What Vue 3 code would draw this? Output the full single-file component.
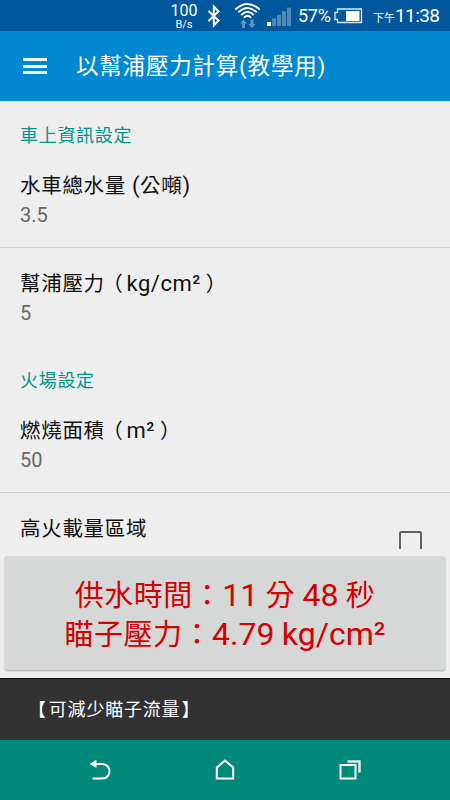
<template>
  <div class="screen">
    <div class="status-bar">
      <div class="speed">
        <span class="speed-num">100</span>
        <span class="speed-unit">B/s</span>
      </div>
      <svg class="bluetooth" width="14" height="24" viewBox="0 0 14 24">
        <path d="M1.5 7 L11.5 16.5 L6.8 21.5 V2.5 L11.5 7.5 L1.5 17" fill="none" stroke="#fff" stroke-width="2" />
      </svg>
      <svg class="wifi" width="28" height="28" viewBox="0 0 28 28">
        <g fill="none" stroke="#fff" stroke-width="1.9">
          <path d="M1.300 7.500 Q13.500 -3.500 25.700 7.500" />
          <path d="M4.300 10.300 Q13.500 1.500 22.700 10.300" />
          <path d="M7.200 13 Q13.500 6.500 19.800 13" />
          <path d="M10 15.600 Q13.500 12 17 15.600" />
        </g>
        <path d="M9.500 17.500 L13 21.500 H11 V26 H8 V21.500 H6 Z M18 26 L14.500 22 H16.500 V17.500 H19.500 V22 H21.500 Z" fill="#5f97c5" />
      </svg>
      <svg class="signal" width="25" height="20" viewBox="0 0 25 20">
        <rect x="0" y="15" width="4" height="4" fill="#fff" />
        <rect v-for="n in 4" :key="n" :x="n * 5" :y="15 - n * 3.6" width="4" :height="4 + n * 3.6" fill="#4f88bb" />
      </svg>
      <span class="percent">57%</span>
      <svg class="battery" width="29" height="16" viewBox="0 0 29 16">
        <path d="M3.500 1 H27.500 V14.500 H3.500 V11.500 H1 V4.500 H3.500 Z" fill="none" stroke="#dce9f4" stroke-width="1.300" />
        <rect x="12" y="3" width="13.500" height="10" fill="#fff" />
      </svg>
      <span class="ampm">下午</span>
      <span class="time">11:38</span>
    </div>

    <header class="toolbar">
      <div class="menu"><i></i><i></i><i></i></div>
      <h1>以幫浦壓力計算(教學用)</h1>
    </header>

    <main class="settings">
      <template v-for="group in groups" :key="group.name">
        <h2>{{ group.name }}</h2>
        <div v-for="item in group.items" :key="item.title" class="pref">
          <div class="pref-text">
            <p class="pref-title"><span class="cjk">{{ item.title }}<template v-if="item.wide"><span class="open">（</span></template></span><template v-if="item.wide"><span class="latin">{{ item.wide }}</span><span class="cjk close">）</span></template><template v-if="item.unit"><span class="latin"> (</span><span class="cjk">{{ item.unit }}</span><span class="latin">)</span></template></p>
            <p v-if="item.value" class="pref-value">{{ item.value }}</p>
          </div>
          <span v-if="item.check" class="checkbox"></span>
        </div>
      </template>
    </main>

    <section class="result-wrap">
      <div class="result">
        <p><span class="cjk">供水時間：</span>11 <span class="cjk">分</span> 48 <span class="cjk">秒</span></p>
        <p><span class="cjk">瞄子壓力：</span>4.79 kg/cm²</p>
      </div>
    </section>

    <div class="hint"><span class="open">【</span>可減少瞄子流量<span class="close">】</span></div>

    <nav class="nav-bar">
      <svg width="24" height="24" viewBox="0 0 24 24">
        <path d="M6 6 H14 C24 6 24 20.500 14 20.500 H4.500" fill="none" stroke="#fff" stroke-width="2" />
        <path d="M1.500 6 L8.500 1.800 V10 Z" fill="#fff" />
      </svg>
      <svg width="24" height="24" viewBox="0 0 24 24">
        <path d="M3.800 20.500 V9.500 L12 2.500 L20.200 9.500 V20.500 Z" fill="none" stroke="#fff" stroke-width="2" />
      </svg>
      <svg width="24" height="24" viewBox="0 0 24 24">
        <path d="M2.500 7 H17.500 V20.500 H2.500 Z" fill="none" stroke="#fff" stroke-width="2" />
        <path d="M9.500 3.500 H21.500 V14.500" fill="none" stroke="#dcefeb" stroke-width="2.500" />
      </svg>
    </nav>
  </div>
</template>

<script setup>
const groups = [
  {
    name: '車上資訊設定',
    items: [
      { title: '水車總水量', unit: '公噸', value: '3.5' },
      { title: '幫浦壓力', wide: 'kg/cm²', value: '5' }
    ]
  },
  {
    name: '火場設定',
    items: [
      { title: '燃燒面積', wide: 'm²', value: '50' },
      { title: '高火載量區域', check: true }
    ]
  }
]
</script>

<style>
body { margin: 0; }
</style>

<style scoped>
.screen {
  width: 450px;
  height: 800px;
  display: flex;
  flex-direction: column;
  overflow: hidden;
  background: #eeeeee;
  font-family: Roboto, "Noto Sans CJK TC", sans-serif;
}
p, h1, h2 { margin: 0; font-weight: normal; white-space: pre; }

.status-bar { flex: none; height: 31px; box-sizing: border-box; padding-right: 12px; background: #01579b; color: #fff; display: flex; justify-content: flex-end; align-items: center; }
.speed { display: flex; flex-direction: column; align-items: center; width: 28px; margin-right: 9px; }
.speed-num { font-size: 16px; line-height: 17px; }
.speed-unit { font-size: 11px; line-height: 11px; }
.bluetooth { margin-right: 13px; }
.wifi { margin-right: 5px; }
.signal { margin: 2px 6px 0 0; }
.percent { width: 33px; font-size: 18px; letter-spacing: -0.3px; }
.battery { margin: 0 10px 0 3px; }
.ampm { font-size: 11px; margin-top: 3px; }
.time { width: 43px; font-size: 19px; letter-spacing: -0.6px; }

.toolbar { flex: none; height: 70px; display: flex; align-items: center; padding-left: 23px; background: #0288d1; color: #fff; }
.menu { width: 24px; height: 16px; margin-right: 29px; display: flex; flex-direction: column; justify-content: space-between; }
.menu i { height: 3px; background: #f4fafd; }
.toolbar h1 { font-size: 22.5px; line-height: 30px; letter-spacing: 0.8px; }

.settings { height: 448px; margin-bottom: 7px; flex: none; overflow: hidden; }
.settings h2 { height: 49px; padding: 21px 20px 0; box-sizing: border-box; font-size: 18px; line-height: 28px; letter-spacing: 0.7px; color: #009688; }
.pref { display: flex; justify-content: space-between; height: 98px; padding: 22px 28px 0 20px; box-sizing: border-box; border-bottom: 1px solid #d2d2d2; }
.pref:has(+ h2) { border-bottom-color: transparent; }
.pref-title { font-size: 20.5px; line-height: 28px; color: #111; }
.pref-title .cjk { letter-spacing: 0.7px; }
.pref-title .latin { font-size: 22px; letter-spacing: 0.5px; }
.pref-title .open { margin: 0 3px 0 -2.5px; }
.pref-title .close { margin-left: 5px; }
.pref-value { font-size: 20px; line-height: 30px; color: #686868; }
.checkbox { width: 23px; height: 23px; margin-top: 16px; box-sizing: border-box; border: 2px solid #606162; border-radius: 2px; }

.result-wrap { flex: none; height: 122px; padding: 0 4px; }
.result { height: 115px; box-sizing: border-box; padding-top: 21px; border-radius: 4px; background: #d6d8d7; border-bottom: 1px solid #c0c0c0; box-shadow: 0 1px 1px rgba(0, 0, 0, 0.12); text-align: center; color: #d50000; }
.result p { font-size: 32px; line-height: 37.5px; word-spacing: -0.6px; }
.result .cjk { font-size: 29px; letter-spacing: 0.5px; }

.hint { flex: none; height: 62px; box-sizing: border-box; padding-left: 28px; background: #323232; border-top: 1px solid #111; color: #fff; font-size: 18px; line-height: 62px; letter-spacing: 0.8px; }
.hint .open { margin-right: 2px; }
.hint .close { margin-left: 1px; }

.nav-bar { flex: none; height: 60px; padding: 0 88px; background: #00897b; display: flex; justify-content: space-between; align-items: center; }
</style>
